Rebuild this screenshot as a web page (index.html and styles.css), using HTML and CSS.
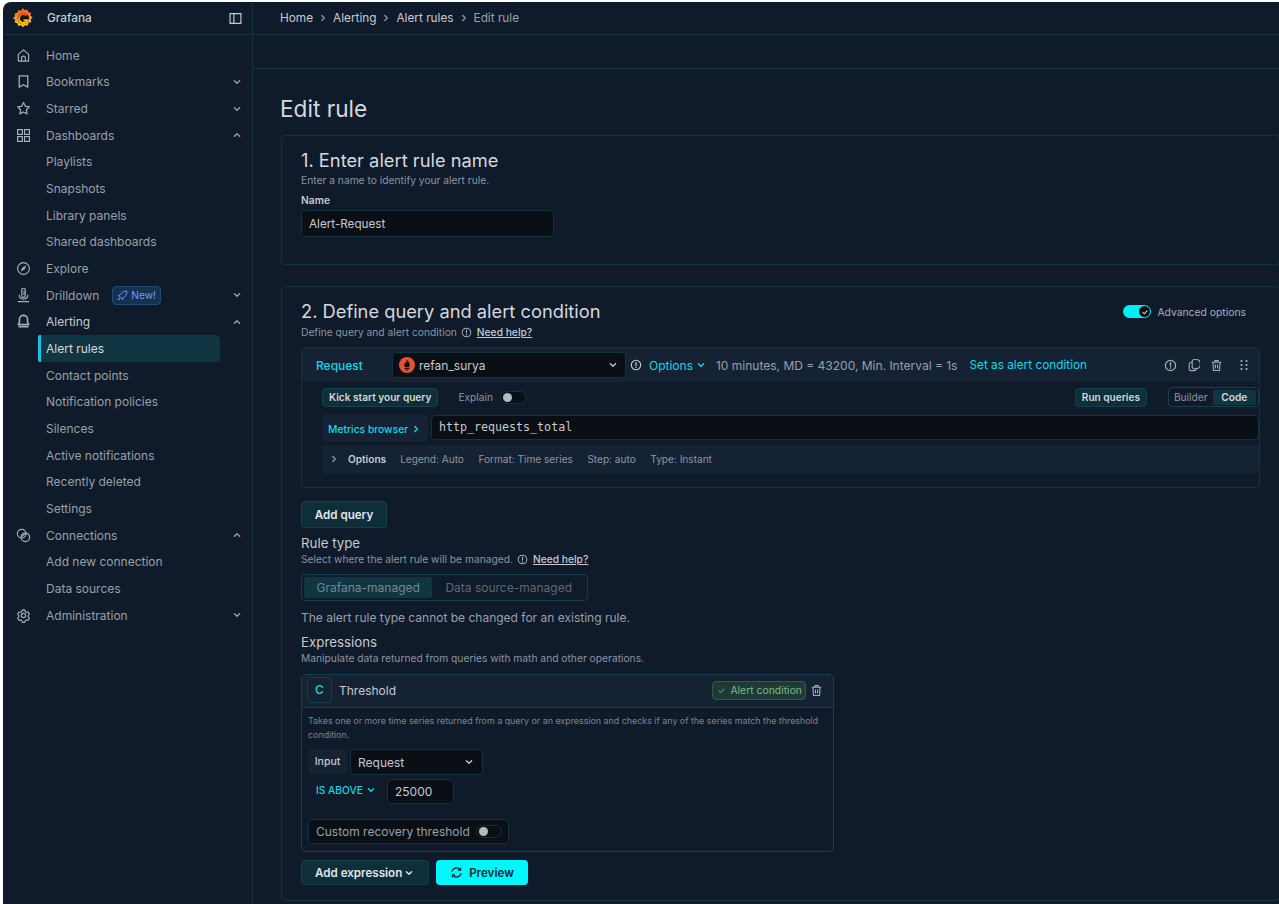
FILE: index.html
```html
<!DOCTYPE html>
<html>
<head>
  <title>Edit rule - Grafana</title>
  <meta charset="UTF-8">
  <link rel="stylesheet" href="styles.css">
</head>
<body>
<svg class="defs" width="0" height="0">
  <defs>
    <linearGradient id="logo-grad" x1="0" y1="1" x2="0" y2="0">
      <stop offset="0" stop-color="#fcd01f"/>
      <stop offset="1" stop-color="#f1552a"/>
    </linearGradient>
    <symbol id="chev-down" viewBox="0 0 10 10"><path d="M2.4 3.8 5 6.3l2.6-2.5" fill="none" stroke="currentColor" stroke-width="1.4" stroke-linecap="round" stroke-linejoin="round"/></symbol>
    <symbol id="chev-up" viewBox="0 0 10 10"><path d="M2.4 6.2 5 3.7l2.6 2.5" fill="none" stroke="currentColor" stroke-width="1.4" stroke-linecap="round" stroke-linejoin="round"/></symbol>
    <symbol id="chev-right" viewBox="0 0 10 10"><path d="M3.8 2.4 6.3 5 3.8 7.6" fill="none" stroke="currentColor" stroke-width="1.4" stroke-linecap="round" stroke-linejoin="round"/></symbol>
    <symbol id="info" viewBox="0 0 12 12"><circle cx="6" cy="6" r="4.7" fill="none" stroke="currentColor" stroke-width="1.1"/><path d="M6 3.4v3.2M6 8.1v.5" fill="none" stroke="currentColor" stroke-width="1.2" stroke-linecap="round"/></symbol>
    <symbol id="trash" viewBox="0 0 12 12"><path d="M1.6 3h8.8M4.4 3V1.5h3.2V3M2.7 3l.5 7.6h5.6L9.3 3M5 5v3.8M7 5v3.8" fill="none" stroke="currentColor" stroke-width="1" stroke-linejoin="round"/></symbol>
  </defs>
</svg>

<div class="frame">
  <aside class="sidebar">
    <div class="brand">
      <svg class="logo" viewBox="0 0 24 24" width="22" height="24">
        <path fill="url(#logo-grad)" d="M12 1l2 2.6 3-1 .8 3 3 .7-.8 3 2.5 2-2 2.4.6 3-3 .6-.8 3-3-.5-2.3 2.2-2.2-2.2-3 .8-1-3-3-.8.7-3L.9 12l2.5-2-.6-3 3-.8 1-3 3 .9z"/>
        <circle cx="12.4" cy="12.5" r="6.2" fill="#1a1512"/>
        <path d="M16 9.2a4.9 4.9 0 1 0 1 5.3h-4.5" fill="none" stroke="url(#logo-grad)" stroke-width="2.2"/>
      </svg>
      <span class="brand-name">Grafana</span>
      <svg class="dock" viewBox="0 0 12 12" width="13" height="13"><path d="M1 1.5h10v9H1zM4.500 1.500v9" fill="none" stroke="currentColor" stroke-width="1.1"/></svg>
    </div>
    <nav class="nav">
      <a class="nav-item"><svg class="nav-icon" viewBox="0 0 14 14"><path d="M2.2 6 7 1.8 11.800 6v6.2H2.2zM5.2 12.2V9.3a1.8 1.8 0 0 1 3.6 0v2.9" fill="none" stroke="currentColor" stroke-width="1.1" stroke-linejoin="round"/></svg>Home</a>
      <a class="nav-item"><svg class="nav-icon" viewBox="0 0 14 14"><path d="M3 1.8h8v10.500L7 10l-4 2.300z" fill="none" stroke="currentColor" stroke-width="1.2" stroke-linejoin="round"/></svg>Bookmarks<svg class="caret"><use href="#chev-down"/></svg></a>
      <a class="nav-item"><svg class="nav-icon" viewBox="0 0 14 14"><path d="m7 1.5 1.700 3.500 3.800.5-2.800 2.700.7 3.800L7 10.200l-3.400 1.800.7-3.800-2.800-2.700 3.800-.5z" fill="none" stroke="currentColor" stroke-width="1.1" stroke-linejoin="round"/></svg>Starred<svg class="caret"><use href="#chev-down"/></svg></a>
      <a class="nav-item"><svg class="nav-icon" viewBox="0 0 14 14"><path d="M1.5 1.5H6V6H1.5zM8 1.5h4.5V6H8zM1.5 8H6v4.500H1.500zM8 8h4.500v4.500H8z" fill="none" stroke="currentColor" stroke-width="1.1"/></svg>Dashboards<svg class="caret"><use href="#chev-up"/></svg></a>
      <a class="nav-item">Playlists</a>
      <a class="nav-item">Snapshots</a>
      <a class="nav-item">Library panels</a>
      <a class="nav-item">Shared dashboards</a>
      <a class="nav-item"><svg class="nav-icon" viewBox="0 0 14 14"><circle cx="7" cy="7" r="5.5" fill="none" stroke="currentColor" stroke-width="1.1"/><path d="M9.7 4.3 8 8 4.3 9.7 6 6z" fill="currentColor"/></svg>Explore</a>
      <a class="nav-item"><svg class="nav-icon" viewBox="0 0 14 14"><path d="M5.4 1.8a1.6 1.6 0 0 1 3.2 0v5.4a1.6 1.6 0 0 1-3.2 0zM3 6.5C3 9 4.5 10.300 7 10.300s4-1.300 4-3.800M2 12.700h10M7 3.500h1.500M7 5.500h1.500" fill="none" stroke="currentColor" stroke-width="1.1" stroke-linecap="round"/></svg>Drilldown<span class="new-badge"><svg viewBox="0 0 12 12" width="11" height="11"><path d="M10.8 1.2C7.5 1 4.800 2.600 3.300 5.500L1.500 6l1.800 1.200L4.800 8.700 6 10.500l.5-1.800C9.400 7.200 11 4.500 10.800 1.200zM2.700 8.500 1.300 10.700 3.500 9.300" fill="none" stroke="currentColor" stroke-width="1"/></svg>New!</span><svg class="caret"><use href="#chev-down"/></svg></a>
      <a class="nav-item"><svg class="nav-icon" viewBox="0 0 14 14"><path d="M7 1.3a3.8 3.8 0 0 0-3.800 3.800v3L2 9.800h10l-1.200-1.700v-3A3.800 3.800 0 0 0 7 1.300zM2.300 11.800h9.400" fill="none" stroke="currentColor" stroke-width="1.5" stroke-linejoin="round"/></svg><span class="bright">Alerting</span><svg class="caret"><use href="#chev-up"/></svg></a>
      <a class="nav-item nav-active">Alert rules</a>
      <a class="nav-item">Contact points</a>
      <a class="nav-item">Notification policies</a>
      <a class="nav-item">Silences</a>
      <a class="nav-item">Active notifications</a>
      <a class="nav-item">Recently deleted</a>
      <a class="nav-item">Settings</a>
      <a class="nav-item"><svg class="nav-icon" viewBox="0 0 14 14"><circle cx="5.3" cy="5.3" r="4" fill="none" stroke="currentColor" stroke-width="1.1"/><circle cx="8.7" cy="8.7" r="4" fill="none" stroke="currentColor" stroke-width="1.1"/><path d="m5 8.500 3.500-3.500" stroke="currentColor" stroke-width="1.1"/></svg>Connections<svg class="caret"><use href="#chev-up"/></svg></a>
      <a class="nav-item">Add new connection</a>
      <a class="nav-item">Data sources</a>
      <a class="nav-item"><svg class="nav-icon" viewBox="0 0 14 14"><circle cx="7" cy="7" r="2" fill="none" stroke="currentColor" stroke-width="1.1"/><path d="m5.8 1.3 2.400 0 .5 1.700 1.500.9 1.800-.4 1.100 2.100-1.200 1.400v1.600l1.200 1.300-1.200 2.100-1.700-.4-1.500.9-.5 1.700H5.800l-.5-1.700-1.500-.9-1.700.4L.9 9.900l1.200-1.300V7L.9 5.600 2.100 3.500l1.700.4 1.500-.9z" transform="translate(.7 .6) scale(.9)" fill="none" stroke="currentColor" stroke-width="1.2" stroke-linejoin="round"/></svg>Administration<svg class="caret"><use href="#chev-down"/></svg></a>
    </nav>
  </aside>

  <main class="main">
    <div class="crumbs">
      <span>Home</span><svg class="sep"><use href="#chev-right"/></svg>
      <span>Alerting</span><svg class="sep"><use href="#chev-right"/></svg>
      <span>Alert rules</span><svg class="sep"><use href="#chev-right"/></svg>
      <span class="crumb-last">Edit rule</span>
    </div>
    <div class="toolbar"></div>
    <div class="content">
      <h1 class="page-title">Edit rule</h1>

      <section class="box box-name">
        <h2 class="box-title">1. Enter alert rule name</h2>
        <p class="hint hint-name">Enter a name to identify your alert rule.</p>
        <label class="field-label">Name</label>
        <div class="input name-input">Alert-Request</div>
      </section>

      <section class="box box-query">
        <div class="title-row">
          <h2 class="box-title">2. Define query and alert condition</h2>
          <div class="advanced">
            <span class="switch-on"><span class="knob"><svg viewBox="0 0 10 10" width="8" height="8"><path d="M2 5.2 4.200 7.300 8 3" fill="none" stroke="#cfd3d8" stroke-width="1.3"/></svg></span></span>
            Advanced options
          </div>
        </div>
        <p class="hint hint-help hint-define">Define query and alert condition <svg class="help-icon"><use href="#info"/></svg> <a class="help-link">Need help?</a></p>

        <div class="query">
          <div class="query-head">
            <span class="query-name">Request</span>
            <div class="input ds-select">
              <svg class="prom" viewBox="0 0 16 16" width="16" height="16">
                <circle cx="8" cy="8" r="8" fill="#e6522c"/>
                <path d="M8 2.5c.5 1.800 2.800 2.700 2.800 5.600 0 .9-.4 1.700-.9 2.200H6.100c-.5-.5-.9-1.300-.9-2.200 0-1.100.6-1.700 1-2.500.3.500.5.800.8.900C7.300 5 7.500 3.700 8 2.500zM5.600 11h4.800v.9H5.600zM6.300 12.500h3.400c-.2.700-.9 1.100-1.700 1.100s-1.500-.4-1.700-1.100z" fill="#0c1018"/>
              </svg>
              <span>refan_surya</span>
              <svg class="caret-sm"><use href="#chev-down"/></svg>
            </div>
            <svg class="q-info"><use href="#info"/></svg>
            <span class="q-options">Options <svg class="caret-sm"><use href="#chev-down"/></svg></span>
            <span class="q-meta">10 minutes, MD = 43200, Min. Interval = 1s</span>
            <span class="q-cond">Set as alert condition</span>
            <div class="q-actions">
              <svg class="q-act"><use href="#info"/></svg>
              <svg class="q-act" viewBox="0 0 12 12"><path d="M4.8 3.3H3.500a1.800 1.800 0 0 0-1.500 1.700v4.200c0 .9.700 1.500 1.500 1.500h3.300c.9 0 1.500-.6 1.500-1.500V8M4.800 1.500a4.500 4.500 0 1 1 0 6.500z" fill="none" stroke="currentColor" stroke-width="1"/></svg>
              <svg class="q-act"><use href="#trash"/></svg>
              <svg class="q-drag" viewBox="0 0 10 12" width="10" height="12"><g fill="currentColor"><circle cx="2.5" cy="2" r="1.1"/><circle cx="7.5" cy="2" r="1.1"/><circle cx="2.5" cy="6" r="1.1"/><circle cx="7.5" cy="6" r="1.1"/><circle cx="2.5" cy="10" r="1.1"/><circle cx="7.5" cy="10" r="1.1"/></g></svg>
            </div>
          </div>
          <div class="query-body">
            <div class="q-row">
              <button class="btn-small">Kick start your query</button>
              <span class="explain">Explain</span>
              <span class="switch-off"><span class="dot"></span></span>
              <div class="q-right">
                <button class="btn-small run-btn">Run queries</button>
                <div class="mode-group"><span>Builder</span><span class="mode-on">Code</span></div>
              </div>
            </div>
            <div class="q-row metrics-row">
              <span class="metrics-label">Metrics browser <svg class="caret-sm"><use href="#chev-right"/></svg></span>
              <div class="input promql">http_requests_total</div>
            </div>
            <div class="opt-bar">
              <svg class="opt-chev"><use href="#chev-right"/></svg>
              <b>Options</b>
              <span>Legend: Auto</span>
              <span>Format: Time series</span>
              <span>Step: auto</span>
              <span>Type: Instant</span>
            </div>
          </div>
        </div>

        <button class="btn add-query">Add query</button>

        <h3 class="sub-title rule-type">Rule type</h3>
        <p class="hint hint-help hint-tight">Select where the alert rule will be managed. <svg class="help-icon"><use href="#info"/></svg> <a class="help-link">Need help?</a></p>
        <div class="radio-group"><span class="radio-on">Grafana-managed</span><span>Data source-managed</span></div>
        <p class="rule-note">The alert rule type cannot be changed for an existing rule.</p>

        <h3 class="sub-title">Expressions</h3>
        <p class="hint hint-tight">Manipulate data returned from queries with math and other operations.</p>

        <div class="expr">
          <div class="expr-head">
            <span class="ref-id">C</span>
            <span class="expr-name">Threshold</span>
            <span class="cond-badge"><svg viewBox="0 0 10 10" width="9" height="9"><path d="M2 5.2 4.200 7.300 8 3" fill="none" stroke="currentColor" stroke-width="1.1"/></svg>Alert condition</span>
            <svg class="expr-trash"><use href="#trash"/></svg>
          </div>
          <div class="expr-body">
            <p class="expr-desc">Takes one or more time series returned from a query or an expression and checks if any of the series match the threshold condition.</p>
            <div class="expr-line">
              <span class="input-label">Input</span>
              <div class="input expr-select">Request<svg class="caret-sm"><use href="#chev-down"/></svg></div>
            </div>
            <div class="expr-line above-line">
              <span class="above">IS ABOVE <svg class="caret-sm"><use href="#chev-down"/></svg></span>
              <div class="input value-input">25000</div>
            </div>
            <div class="recovery">Custom recovery threshold<span class="switch-off"><span class="dot"></span></span></div>
          </div>
        </div>

        <div class="actions">
          <button class="btn add-expr">Add expression<svg class="caret-sm"><use href="#chev-down"/></svg></button>
          <button class="btn-primary"><svg viewBox="0 0 14 14" width="13" height="13"><path d="M2 6.2A5 5 0 0 1 11 4.200M12 7.800A5 5 0 0 1 3 9.800M11.400 1.600v2.900H8.500M2.600 12.400V9.500h2.900" fill="none" stroke="currentColor" stroke-width="1.3"/></svg>Preview</button>
        </div>
      </section>
    </div>
  </main>
</div>
</body>
</html>
```

FILE: styles.css
```css
html, body {
  margin: 0;
  height: 100%;
  overflow: hidden;
  background: #fff;
}
body {
  font-family: Inter, "Liberation Sans", sans-serif;
  font-size: 12px;
  color: #c6cad0;
}
.defs {
  position: absolute;
}
p, h1, h2, h3 {
  margin: 0;
  font-weight: 400;
}
button {
  font-family: inherit;
  cursor: pointer;
}

.frame {
  display: flex;
  height: 902px;
  margin: 2px 0 0 3px;
  background: #0f1a2a;
  border-top-left-radius: 8px;
  overflow: hidden;
}

/* sidebar */
.sidebar {
  flex: none;
  width: 249px;
  border-right: 1px solid #13323f;
}
.brand {
  display: flex;
  align-items: center;
  height: 32px;
  border-bottom: 1px solid #13323f;
  padding: 0 10px 0 9px;
}
.brand-name {
  margin-left: 13px;
  font-size: 11.8px;
  font-weight: 500;
}
.dock {
  margin-left: auto;
}
.nav {
  padding-top: 7px;
}
.nav-item {
  position: relative;
  display: flex;
  align-items: center;
  height: 26.67px;
  padding-left: 43px;
  color: #99a0a9;
}
.nav-icon {
  position: absolute;
  left: 12.5px;
  width: 15px;
  height: 15px;
  color: #a8aeb6;
}
.caret {
  position: absolute;
  left: 229px;
  width: 10px;
  height: 10px;
}
.bright {
  color: #c6cad0;
}
.nav-item.nav-active {
  box-sizing: border-box;
  width: 182px;
  margin-left: 35px;
  padding-left: 5px;
  color: #d5d8dc;
  background: #103644;
  border-left: 3px solid #13c6e3;
  border-radius: 2px 4px 4px 2px;
}
.new-badge {
  display: inline-flex;
  align-items: center;
  gap: 3px;
  height: 17px;
  margin-left: 13px;
  padding: 0 4px;
  color: #6e9fff;
  background: #16304f;
  border: 1px solid #1f4a7a;
  border-radius: 4px;
  font-size: 10.2px;
}

/* main column */
.main {
  flex: 1;
  min-width: 0;
}
.crumbs {
  display: flex;
  align-items: center;
  height: 32px;
  padding-left: 27px;
  border-bottom: 1px solid #13323f;
  font-size: 11.8px;
}
.sep {
  width: 10px;
  height: 10px;
  margin: 0 5px;
  color: #8e95a0;
}
.crumb-last {
  color: #99a0a9;
}
.toolbar {
  height: 33px;
  border-bottom: 1px solid #13323f;
}
.content {
  padding-left: 28px;
}
.page-title {
  height: 66px;
  margin-left: -1px;
  line-height: 79px;
  font-size: 22.6px;
  color: #d5d8dc;
}

.box {
  width: 999px;
  box-sizing: border-box;
  padding: 0 19px;
  border: 1px solid #13323f;
  border-radius: 4px;
}
.box-name {
  height: 130px;
  margin-bottom: 21px;
  padding-top: 14px;
}
.box-query {
  height: 615px;
  padding-top: 14px;
}
.box-title {
  font-size: 18.3px;
  line-height: 21px;
  color: #d5d8dc;
}
.hint {
  font-size: 10.25px;
  line-height: 13px;
  margin-top: 2px;
  color: #8e95a0;
}
.hint-name {
  margin-top: 3px;
}
.hint-define {
  margin-top: 4px;
}
.hint-tight {
  margin-top: 1px;
}
.field-label {
  display: block;
  margin-top: 6px;
  font-size: 10.25px;
  line-height: 14px;
  font-weight: 600;
}
.input {
  box-sizing: border-box;
  display: flex;
  align-items: center;
  background: #0a0e15;
  border: 1px solid #13323f;
  border-radius: 4px;
}
.name-input {
  width: 253px;
  height: 27px;
  margin-top: 3px;
  padding-left: 7px;
  font-size: 11.7px;
}

.title-row {
  display: flex;
  align-items: center;
  height: 21px;
}
.advanced {
  display: flex;
  align-items: center;
  gap: 6px;
  margin-left: auto;
  margin-right: 14px;
  font-size: 10.35px;
  color: #a8aeb6;
}
.switch-on {
  display: flex;
  align-items: center;
  justify-content: flex-end;
  width: 27px;
  height: 13px;
  padding: 0 1px 0 0;
  background: #00eff5;
  border-radius: 7px;
}
.knob {
  display: flex;
  align-items: center;
  justify-content: center;
  width: 11px;
  height: 11px;
  background: #0a0e15;
  border-radius: 50%;
}
.hint-help {
  display: flex;
  align-items: center;
  gap: 4px;
}
.help-icon {
  width: 11px;
  height: 11px;
  color: #a8aeb6;
}
.help-link {
  margin-left: 1px;
  color: #c6cad0;
  font-weight: 500;
  text-decoration: underline;
}

/* query box */
.query {
  box-sizing: border-box;
  height: 141px;
  margin-top: 8px;
  border: 1px solid #13323f;
  border-radius: 4px;
}
.query-head {
  display: flex;
  align-items: center;
  height: 34px;
  background: #152233;
}
.query-name {
  width: 76px;
  margin-left: 14px;
  color: #10d8e8;
  font-weight: 500;
}
.ds-select {
  width: 234px;
  height: 26px;
  padding: 0 7px 0 6px;
  gap: 4px;
}
.ds-select .caret-sm {
  margin-left: auto;
}
.caret-sm {
  width: 10px;
  height: 10px;
  flex: none;
}
.q-info {
  width: 12px;
  height: 12px;
  margin-left: 4px;
}
.q-options {
  display: inline-flex;
  align-items: center;
  gap: 3px;
  margin-left: 7px;
  color: #10d8e8;
}
.q-meta {
  margin-left: 10px;
  color: #99a0a9;
}
.q-cond {
  margin-left: 12px;
  font-size: 11.8px;
  color: #10d8e8;
}
.q-actions {
  display: flex;
  align-items: center;
  margin-left: auto;
  color: #a8aeb6;
}
.q-act {
  width: 13px;
  height: 13px;
  margin-right: 10px;
}
.q-drag {
  margin: 0 10px 0 6px;
}
.query-body {
  padding: 5px 0 0 20px;
}
.q-row {
  display: flex;
  align-items: center;
  height: 20px;
}
.btn-small {
  height: 19px;
  padding: 0 6px;
  color: #d5d8dc;
  background: #0e2f39;
  border: 1px solid #13404a;
  border-radius: 4px;
  font-size: 10.1px;
  font-weight: 600;
}
.explain {
  margin-left: 20px;
  margin-right: 7px;
  font-size: 10.2px;
  color: #8e95a0;
}
.switch-off {
  display: inline-flex;
  align-items: center;
  box-sizing: border-box;
  width: 26px;
  height: 13px;
  padding-left: 2px;
  background: #0a0e15;
  border: 1px solid #13323f;
  border-radius: 7px;
}
.dot {
  width: 9px;
  height: 9px;
  background: #b6b9bd;
  border-radius: 50%;
}
.q-right {
  display: flex;
  align-items: center;
  margin-left: auto;
}
.run-btn {
  margin-right: 21px;
}
.mode-group {
  display: flex;
  align-items: center;
  box-sizing: border-box;
  width: 91px;
  height: 20px;
  padding: 0 2px 0 0;
  border: 1px solid #13404a;
  border-radius: 4px;
  font-size: 10.2px;
  color: #8e95a0;
}
.mode-group span {
  flex: 1;
  text-align: center;
}
.mode-on {
  height: 15px;
  line-height: 15px;
  color: #d5d8dc;
  font-weight: 600;
  background: #103644;
  border-radius: 2px;
}
.metrics-row {
  height: 27px;
  margin-top: 8px;
}
.metrics-label {
  display: flex;
  align-items: center;
  gap: 3px;
  box-sizing: border-box;
  width: 106px;
  height: 27px;
  padding-left: 6px;
  background: #152233;
  border-radius: 4px;
  color: #10d8e8;
  font-size: 10.3px;
  font-weight: 500;
}
.promql {
  flex: 1;
  height: 25px;
  margin-left: 3px;
  margin-bottom: 2px;
  padding: 0 0 2px 7px;
  font-family: "DejaVu Sans Mono", "Liberation Mono", monospace;
  font-size: 11.65px;
}
.opt-bar {
  display: flex;
  align-items: center;
  height: 28px;
  margin-top: 3px;
  background: #152233;
  border-radius: 4px;
  font-size: 10.1px;
  color: #8e95a0;
}
.opt-chev {
  width: 10px;
  height: 10px;
  margin-left: 7px;
  margin-right: 9px;
}
.opt-bar b {
  margin-right: 14px;
  font-weight: 600;
  color: #c6cad0;
}
.opt-bar span {
  margin-right: 14.5px;
}

.btn {
  height: 27px;
  color: #e3e5e8;
  background: #0e2f39;
  border: 1px solid #13404a;
  border-radius: 4px;
  font-size: 11.6px;
  font-weight: 600;
}
.add-query {
  display: block;
  width: 86px;
  margin-top: 13px;
}
.sub-title {
  font-size: 13.3px;
  line-height: 18px;
}
.rule-type {
  margin-top: 6px;
}
.radio-group {
  display: flex;
  align-items: center;
  box-sizing: border-box;
  width: 287px;
  height: 27px;
  margin-top: 8px;
  padding: 0 2px;
  border: 1px solid #13404a;
  border-radius: 4px;
  color: #5f6873;
  white-space: nowrap;
}
.radio-group span {
  padding: 0 13px;
  line-height: 21px;
}
.radio-group .radio-on {
  width: 131px;
  box-sizing: border-box;
  padding: 0;
  text-align: center;
  background: #103644;
  border-radius: 3px;
  color: #78858e;
}
.rule-note {
  margin-top: 9px;
  margin-bottom: 7px;
  line-height: 16px;
  color: #99a0a9;
}

/* threshold card */
.expr {
  width: 533px;
  box-sizing: border-box;
  height: 178px;
  margin-top: 9px;
  border: 1px solid #13404a;
  border-radius: 4px;
}
.expr-head {
  display: flex;
  align-items: center;
  height: 33px;
  padding: 0 10px 2px 5px;
  box-sizing: border-box;
  background: #152233;
  border-bottom: 1px solid #13404a;
}
.ref-id {
  box-sizing: border-box;
  width: 25px;
  height: 26px;
  line-height: 24px;
  text-align: center;
  color: #10d8e8;
  font-weight: 500;
  border: 1px solid #13404a;
  border-radius: 4px;
}
.expr-name {
  margin-left: 7px;
}
.cond-badge {
  display: flex;
  align-items: center;
  gap: 4px;
  box-sizing: border-box;
  height: 19px;
  margin-left: auto;
  padding: 0 3px 0 4px;
  color: #79b98b;
  background: #1e3a35;
  border: 1px solid #2f5c48;
  border-radius: 4px;
  font-size: 10.4px;
}
.expr-trash {
  width: 13px;
  height: 13px;
  margin-left: 4px;
  color: #a8aeb6;
}
.expr-body {
  padding: 6px 6px 0;
}
.expr-desc {
  font-size: 8.9px;
  line-height: 13.5px;
  color: #7d8590;
}
.expr-line {
  display: flex;
  align-items: center;
  gap: 3px;
  margin-top: 8px;
}
.input-label {
  box-sizing: border-box;
  width: 39px;
  height: 26px;
  line-height: 25px;
  text-align: center;
  background: #152233;
  border-radius: 4px;
  font-size: 10.5px;
  font-weight: 500;
}
.expr-select {
  justify-content: space-between;
  width: 133px;
  height: 26px;
  padding: 0 8px 0 7px;
}
.above-line {
  margin-top: 4px;
}
.above {
  display: inline-flex;
  align-items: center;
  gap: 3px;
  width: 76px;
  padding: 0 0 3px 8px;
  box-sizing: border-box;
  font-size: 10.2px;
  font-weight: 500;
  color: #10d8e8;
}
.value-input {
  width: 67px;
  height: 25px;
  padding-left: 7px;
}
.recovery {
  display: flex;
  align-items: center;
  gap: 6px;
  box-sizing: border-box;
  width: 201px;
  height: 25px;
  margin-top: 15px;
  padding-left: 7px;
  color: #99a0a9;
  background: #0a0e15;
  border: 1px solid #13323f;
  border-radius: 4px;
}
.actions {
  display: flex;
  gap: 7px;
  margin-top: 8px;
}
.add-expr {
  display: flex;
  align-items: center;
  gap: 2px;
  width: 128px;
  height: 25px;
  padding-left: 13px;
}
.btn-primary {
  display: flex;
  align-items: center;
  justify-content: center;
  gap: 6px;
  width: 92px;
  height: 25px;
  color: #0b2a33;
  background: #00f7fb;
  border: 0;
  border-radius: 4px;
  font-size: 11.6px;
  font-weight: 600;
}
```
